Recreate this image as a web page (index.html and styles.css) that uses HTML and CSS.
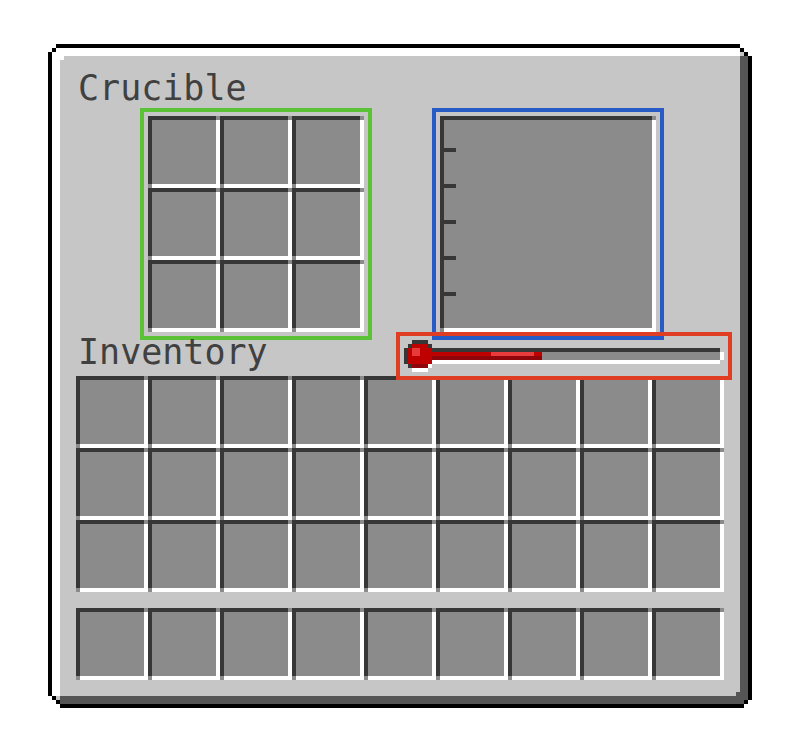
FILE: index.html
```html
<!DOCTYPE html>
<html lang="en">
<head>
<meta charset="utf-8">
<meta name="viewport" content="width=device-width, initial-scale=1">
<title>Crucible</title>
<link rel="stylesheet" href="styles.css">
</head>
<body>
<main class="panel">
  <svg class="corner corner-tl" viewBox="0 0 4 4" shape-rendering="crispEdges" aria-hidden="true">
    <path fill="#fff" d="M0 0h4v4H0z"/><path fill="#000" d="M2 0h2v1H2zM1 1h1v1H1zM0 2h1v2H0z"/>
  </svg>
  <svg class="corner corner-tr" viewBox="0 0 4 4" shape-rendering="crispEdges" aria-hidden="true">
    <path fill="#fff" d="M0 0h4v4H0z"/><path fill="#c6c6c6" d="M1 2h1v1H1zM0 3h1v1H0z"/><path fill="#555" d="M1 3h2v1H1z"/><path fill="#000" d="M0 0h1v1H0zM1 1h1v1H1zM2 2h1v1H2zM3 3h1v1H3z"/>
  </svg>
  <svg class="corner corner-bl" viewBox="0 0 4 4" shape-rendering="crispEdges" aria-hidden="true">
    <path fill="#fff" d="M0 0h4v4H0z"/><path fill="#c6c6c6" d="M2 1h1v1H2zM3 0h1v1H3z"/><path fill="#555" d="M3 1h1v2H3z"/><path fill="#000" d="M0 0h1v1H0zM1 1h1v1H1zM2 2h1v1H2zM3 3h1v1H3z"/>
  </svg>
  <svg class="corner corner-br" viewBox="0 0 4 4" shape-rendering="crispEdges" aria-hidden="true">
    <path fill="#fff" d="M0 0h4v4H0z"/><path fill="#555" d="M0 0h3v3H0z"/><path fill="#000" d="M3 0h1v2H3zM2 2h1v1H2zM0 3h2v1H0z"/>
  </svg>

  <h1 class="label title">Crucible</h1>
  <section class="workspace">
    <div class="outline outline-green">
      <div class="grid grid-input">
        <button class="slot" aria-label="Input 1"></button><button class="slot" aria-label="Input 2"></button><button class="slot" aria-label="Input 3"></button>
        <button class="slot" aria-label="Input 4"></button><button class="slot" aria-label="Input 5"></button><button class="slot" aria-label="Input 6"></button>
        <button class="slot" aria-label="Input 7"></button><button class="slot" aria-label="Input 8"></button><button class="slot" aria-label="Input 9"></button>
      </div>
    </div>
    <div class="outline outline-blue">
      <div class="slot tank">
        <span class="tick"></span><span class="tick"></span><span class="tick"></span><span class="tick"></span><span class="tick"></span>
      </div>
    </div>
  </section>

  <div class="inventory-head">
    <h2 class="label">Inventory</h2>
    <div class="heat">
      <svg class="thermometer" viewBox="4 4 328 40" shape-rendering="crispEdges" role="img" aria-label="Heat">
        <path fill="#8b8b8b" d="M36 20h288v8H36z"/>
        <path fill="#373737" d="M36 16h288v4H36zM16 8h16v4H16zM12 12h4v4h-4zM32 12h4v4h-4zM8 16h4v16H8zM12 32h4v4h-4z"/>
        <path fill="#fff" d="M36 28h288v4H36zM324 20h4v8h-4zM32 32h4v4h-4zM16 36h16v4H16z"/>
        <path fill="#bf0000" d="M16 12h16v4h4v16H12V16h4zM36 20h110v4H36z"/>
        <path fill="#8f060a" d="M36 24h110v4H36zM16 32h16v4H16z"/>
        <path fill="#e83b3b" d="M16 16h8v8h-8zM95 20h43v4H95z"/>
      </svg>
    </div>
  </div>

  <section class="grid grid-inventory" aria-label="Inventory">
    <button class="slot" aria-label="Slot 1"></button><button class="slot" aria-label="Slot 2"></button><button class="slot" aria-label="Slot 3"></button><button class="slot" aria-label="Slot 4"></button><button class="slot" aria-label="Slot 5"></button><button class="slot" aria-label="Slot 6"></button><button class="slot" aria-label="Slot 7"></button><button class="slot" aria-label="Slot 8"></button><button class="slot" aria-label="Slot 9"></button>
    <button class="slot" aria-label="Slot 10"></button><button class="slot" aria-label="Slot 11"></button><button class="slot" aria-label="Slot 12"></button><button class="slot" aria-label="Slot 13"></button><button class="slot" aria-label="Slot 14"></button><button class="slot" aria-label="Slot 15"></button><button class="slot" aria-label="Slot 16"></button><button class="slot" aria-label="Slot 17"></button><button class="slot" aria-label="Slot 18"></button>
    <button class="slot" aria-label="Slot 19"></button><button class="slot" aria-label="Slot 20"></button><button class="slot" aria-label="Slot 21"></button><button class="slot" aria-label="Slot 22"></button><button class="slot" aria-label="Slot 23"></button><button class="slot" aria-label="Slot 24"></button><button class="slot" aria-label="Slot 25"></button><button class="slot" aria-label="Slot 26"></button><button class="slot" aria-label="Slot 27"></button>
  </section>
  <section class="grid grid-inventory hotbar" aria-label="Hotbar">
    <button class="slot" aria-label="Hotbar 1"></button><button class="slot" aria-label="Hotbar 2"></button><button class="slot" aria-label="Hotbar 3"></button><button class="slot" aria-label="Hotbar 4"></button><button class="slot" aria-label="Hotbar 5"></button><button class="slot" aria-label="Hotbar 6"></button><button class="slot" aria-label="Hotbar 7"></button><button class="slot" aria-label="Hotbar 8"></button><button class="slot" aria-label="Hotbar 9"></button>
  </section>
</main>
</body>
</html>
```
FILE: styles.css
```css
* {
  box-sizing: border-box;
}

body {
  margin: 0;
  padding: 44px 48px;
  background: #fff;
  color: #404040;
  font-family: "DejaVu Sans Mono", monospace;
}

.panel {
  position: relative;
  max-width: 704px;
  margin: 0 auto;
  padding: 8px 24px 24px;
  border: 4px solid #000;
  padding-bottom: 24px;
  background: #c6c6c6;
  box-shadow: inset 8px 8px #fff, inset -8px -8px #555;
}

/* One art pixel is 4px; each corner piece covers 4 x 4 of them. */
.corner {
  position: absolute;
  width: 16px;
  height: 16px;
}

.corner-tl { top: -4px; left: -4px; }
.corner-tr { top: -4px; right: -4px; }
.corner-bl { bottom: -4px; left: -4px; }
.corner-br { bottom: -4px; right: -4px; }

.label {
  margin: 0;
  padding-left: 2px;
  font-size: 35px;
  font-weight: 400;
  line-height: 40px;
}

.title {
  padding-top: 12px;
}

.workspace {
  display: flex;
  justify-content: space-between;
  padding: 0 60px 0 64px;
}

.outline {
  flex: 0 1 232px;
  padding: 4px;
  border: 4px solid;
}

.outline-green { border-color: #5ac234; }
.outline-blue { border-color: #285bc5; }

.grid {
  display: grid;
}

.grid-input {
  grid-template-columns: repeat(3, 1fr);
}

.grid-inventory {
  grid-template-columns: repeat(9, 1fr);
}

.hotbar {
  margin-top: 16px;
}

.slot {
  aspect-ratio: 1;
  min-width: 0;
  padding: 0;
  border: 0;
  background:
    linear-gradient(#373737, #373737) left top / calc(100% - 4px) 4px no-repeat,
    linear-gradient(#373737, #373737) left top / 4px calc(100% - 4px) no-repeat,
    linear-gradient(#fff, #fff) right bottom / calc(100% - 4px) 4px no-repeat,
    linear-gradient(#fff, #fff) right bottom / 4px calc(100% - 4px) no-repeat,
    #8b8b8b;
}

.tank {
  display: flex;
  flex-direction: column;
  gap: 32px;
  padding: 32px 0 0 4px;
}

.tick {
  width: 12px;
  height: 4px;
  background: #373737;
}

/* The heading row and its gauge overlap the tank above and the slots below. */
.inventory-head {
  position: relative;
  margin-top: -8px;
  padding-bottom: 4px;
}

.heat {
  position: absolute;
  top: 0;
  right: -8px;
  width: 336px;
  height: 48px;
  border: 4px solid #e03e23;
}

.thermometer {
  display: block;
  width: 100%;
  height: 100%;
}
```
